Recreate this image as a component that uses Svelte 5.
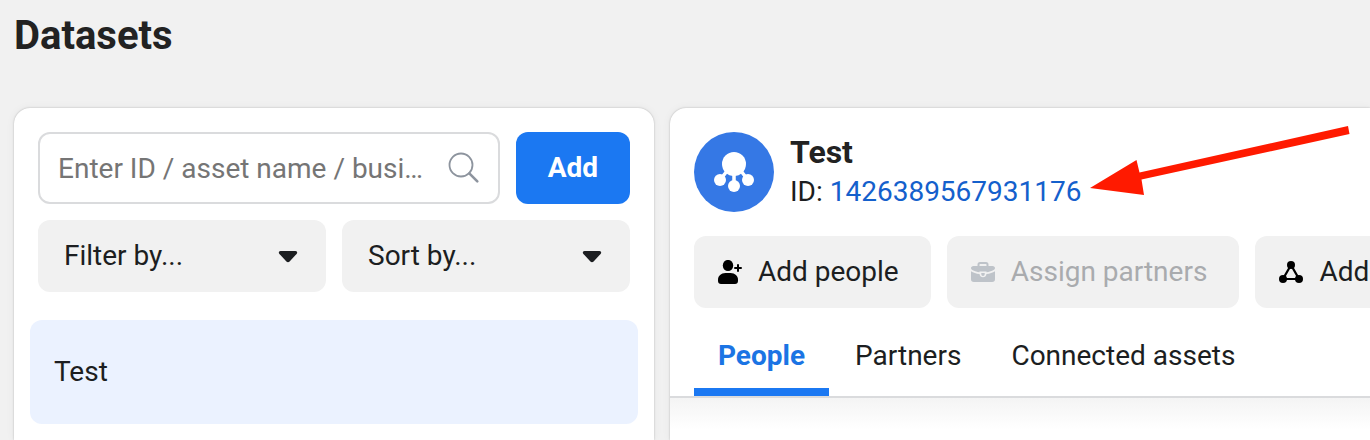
<script>
    let query = '';
    let activeTab = 'people';

    const filters = [
        { id: 'filter', label: 'Filter by...' },
        { id: 'sort', label: 'Sort by...' }
    ];

    const datasets = [{ id: '1426389567931176', name: 'Test' }];
    let selected = datasets[0];

    const actions = [
        { icon: 'person', label: 'Add people' },
        { icon: 'briefcase', label: 'Assign partners', disabled: true },
        { icon: 'assets', label: 'Add assets' }
    ];

    const tabs = [
        { id: 'people', label: 'People' },
        { id: 'partners', label: 'Partners' },
        { id: 'assets', label: 'Connected assets' }
    ];
</script>

<main class="page">
    <h1>Datasets</h1>

    <div class="columns">
        <section class="card list-card" aria-label="Dataset list">
            <div class="search-row">
                <label class="search">
                    <input
                        type="text"
                        bind:value={query}
                        aria-label="Search datasets"
                        placeholder="Enter ID / asset name / business name"
                    />
                    <svg width="32" height="32" viewBox="0 0 32 32" aria-hidden="true">
                        <circle cx="13" cy="13" r="11.5" fill="none" stroke="#8d949e" stroke-width="1.8" />
                        <path d="M21.300 21.300l8 8" stroke="#8d949e" stroke-width="2.600" stroke-linecap="round" />
                    </svg>
                </label>
                <button type="button" class="add">Add</button>
            </div>

            <div class="filters">
                {#each filters as filter (filter.id)}
                    <div class="dropdown">
                        <select aria-label={filter.label}>
                            <option>{filter.label}</option>
                        </select>
                        <svg class="caret" width="20" height="12" viewBox="0 0 20 12" aria-hidden="true">
                            <path d="M2.500 0h15c1.700 0 2.200 1.800 1.100 2.900l-7 7.500c-1 1-2.200 1-3.200 0l-7-7.500C.3 1.800.8 0 2.500 0z" fill="#1c1e21" />
                        </svg>
                    </div>
                {/each}
            </div>

            <ul class="datasets">
                {#each datasets as dataset (dataset.id)}
                    <li>
                        <button
                            type="button"
                            class="dataset"
                            class:selected={dataset === selected}
                            on:click={() => (selected = dataset)}
                        >
                            {dataset.name}
                        </button>
                    </li>
                {/each}
            </ul>
        </section>

        <section class="card detail" aria-label="Dataset details">
            <header class="detail-header">
                <svg class="avatar" width="80" height="80" viewBox="0 0 80 80" aria-hidden="true">
                    <circle cx="40" cy="40" r="40" fill="#3578e5" />
                    <g fill="#fff">
                        <circle cx="40" cy="32" r="12" />
                        <circle cx="26" cy="48" r="6" />
                        <circle cx="40" cy="54" r="6" />
                        <circle cx="54" cy="48" r="6" />
                    </g>
                    <path d="M33 39l-7 9M40 40v14M47 39l7 9" stroke="#fff" stroke-width="3.500" />
                </svg>
                <div class="identity">
                    <h2>{selected.name}</h2>
                    <p>
                        ID:
                        <span class="id-link">
                            <a href="#{selected.id}">{selected.id}</a>
                            <svg class="arrow" width="262" height="70" viewBox="0 0 262 70" aria-hidden="true">
                                <path d="M0 62L46.500 34l3 12.500L258 0l1.500 8L51.500 53.500 54 69z" fill="#ff1a00" />
                            </svg>
                        </span>
                    </p>
                </div>
            </header>

            <div class="actions">
                {#each actions as action (action.icon)}
                    <button type="button" class="action" disabled={action.disabled}>
                        <svg width="24" height="24" viewBox="0 0 24 24" aria-hidden="true">
                            {#if action.icon === 'person'}
                                <ellipse cx="10" cy="5.500" rx="5.200" ry="5.600" />
                                <path d="M7.500 13h5c4.500 0 7.500 3 7.500 6.700V21c0 2-1.200 3-3 3H3c-1.800 0-3-1-3-3v-1.300C0 16 3 13 7.500 13z" />
                                <path d="M20 5v6M17 8h6" fill="none" stroke="currentColor" stroke-width="2" stroke-linecap="round" />
                            {:else if action.icon === 'briefcase'}
                                <path d="M7.500 6V4.500c0-1 .7-1.500 1.500-1.500h6c.8 0 1.500.5 1.500 1.500V6" fill="none" stroke="currentColor" stroke-width="2" />
                                <path d="M2.500 6h19C23 6 24 7 24 8.200c0 1.500-3.500 3.300-8.500 4.100v-.8h-7v.8C3.500 11.500 0 9.700 0 8.200 0 7 1 6 2.500 6z" />
                                <path d="M0 11.200c2.300 1.500 5.200 2.400 8.500 2.900.4 2.100 1.600 3.200 3.500 3.200s3.100-1.100 3.500-3.200c3.300-.5 6.200-1.400 8.500-2.900v8c0 1.800-1 2.800-2.800 2.800H2.800C1 22 0 21 0 19.200z" />
                                <path d="M10.300 13h3.400v1c0 1.300-.7 1.900-1.700 1.900s-1.700-.6-1.700-1.900z" />
                            {:else}
                                <path d="M12 5L4 19h16z" fill="none" stroke="currentColor" stroke-width="2.200" />
                                <circle cx="12" cy="5" r="4" />
                                <circle cx="4" cy="19" r="4" />
                                <circle cx="20" cy="19" r="4" />
                            {/if}
                        </svg>
                        {action.label}
                    </button>
                {/each}
            </div>

            <div class="tabs" role="tablist">
                {#each tabs as tab (tab.id)}
                    <button
                        type="button"
                        role="tab"
                        class="tab"
                        class:active={tab.id === activeTab}
                        aria-selected={tab.id === activeTab}
                        on:click={() => (activeTab = tab.id)}
                    >
                        {tab.label}
                    </button>
                {/each}
            </div>
            <div class="panel" role="tabpanel"></div>
        </section>
    </div>
</main>

<style>
    :global(body) {
        margin: 0;
        overflow-x: hidden;
        background: #f1f1f1;
    }

    .page {
        box-sizing: border-box;
        display: flex;
        flex-direction: column;
        min-height: 100vh;
        padding: 12px 0 0 14px;
        color: #1c1e21;
        font-family: Roboto, sans-serif;
        font-size: 28px;
        line-height: 40px;
    }

    button,
    input,
    select {
        box-sizing: border-box;
        margin: 0;
        border: none;
        color: inherit;
        font: inherit;
    }

    button {
        cursor: pointer;
    }

    h1 {
        margin: 0 0 48px;
        color: #222;
        font-size: 40px;
        font-weight: 700;
        line-height: 48px;
    }

    .columns {
        display: grid;
        flex: 1;
        grid-template-columns: 32fr minmax(0, 35fr);
        gap: 16px;
    }

    .card {
        box-sizing: border-box;
        min-width: 0;
        padding-top: 24px;
        background: #fff;
        border-radius: 16px 16px 0 0;
        box-shadow: 0 0 2px rgba(0, 0, 0, 0.25), 0 0 10px rgba(0, 0, 0, 0.05);
    }

    .list-card {
        padding: 24px 24px 16px;
    }

    .search-row,
    .filters {
        display: flex;
        gap: 16px;
    }

    .search {
        box-sizing: border-box;
        display: flex;
        flex: 1;
        align-items: center;
        gap: 24px;
        min-width: 0;
        height: 72px;
        padding: 0 18px;
        border: 2px solid #dadbdd;
        border-radius: 12px;
    }

    .search svg {
        flex: none;
    }

    .search input {
        flex: 1;
        min-width: 0;
        padding: 2px 0 0;
        background: transparent;
        outline: none;
        text-overflow: ellipsis;
    }

    .search input::placeholder {
        color: #757575;
        opacity: 1;
    }

    .add {
        padding: 0 32px;
        background: #1b78f2;
        border-radius: 12px;
        color: #fff;
        font-weight: 700;
    }

    .filters {
        margin-top: 16px;
    }

    .dropdown {
        position: relative;
        flex: 1;
    }

    .dropdown select {
        width: 100%;
        height: 72px;
        padding: 0 56px 0 26px;
        appearance: none;
        background: #f1f1f1;
        border-radius: 12px;
    }

    .caret {
        position: absolute;
        top: 31px;
        right: 28px;
        pointer-events: none;
    }

    .datasets {
        margin: 28px -8px 0;
        padding: 0;
        list-style: none;
    }

    .dataset {
        width: 100%;
        height: 104px;
        padding: 0 24px;
        background: transparent;
        border-radius: 12px;
        text-align: left;
    }

    .dataset.selected {
        background: #ebf2ff;
    }

    .detail {
        border-radius: 16px 0 0 0;
    }

    .detail-header {
        display: flex;
        gap: 16px;
        padding: 0 24px;
    }

    .avatar {
        flex: none;
    }

    h2,
    .identity p {
        margin: 0;
        white-space: nowrap;
    }

    h2 {
        color: #222;
        font-size: 32px;
        font-weight: 700;
    }

    .id-link {
        position: relative;
        display: inline-block;
    }

    .id-link a {
        color: #1460cc;
        text-decoration: none;
    }

    .arrow {
        position: absolute;
        bottom: 16px;
        left: 100%;
        margin-left: 8px;
        pointer-events: none;
    }

    .actions {
        display: flex;
        gap: 16px;
        padding: 24px 0 0 24px;
        overflow: hidden;
    }

    .action {
        display: flex;
        flex: none;
        align-items: center;
        gap: 16px;
        height: 72px;
        padding: 0 32px 0 24px;
        background: #f1f1f1;
        border-radius: 12px;
        white-space: nowrap;
    }

    .action svg {
        color: #000;
        fill: currentColor;
    }

    .action:disabled {
        color: #a9abae;
        cursor: default;
    }

    .action:disabled svg {
        color: #bec3c9;
    }

    .tabs {
        display: flex;
        gap: 2px;
        padding: 8px 24px 0;
        border-bottom: 2px solid #dadbdd;
    }

    .tab {
        height: 80px;
        padding: 8px 24px 0;
        background: transparent;
        border-bottom: 8px solid transparent;
        white-space: nowrap;
    }

    .tab.active {
        border-bottom-color: #1b78f2;
        color: #1b74e4;
        font-weight: 700;
    }

    .panel {
        height: 32px;
        background: linear-gradient(#f4f4f4, #fff);
    }
</style>
